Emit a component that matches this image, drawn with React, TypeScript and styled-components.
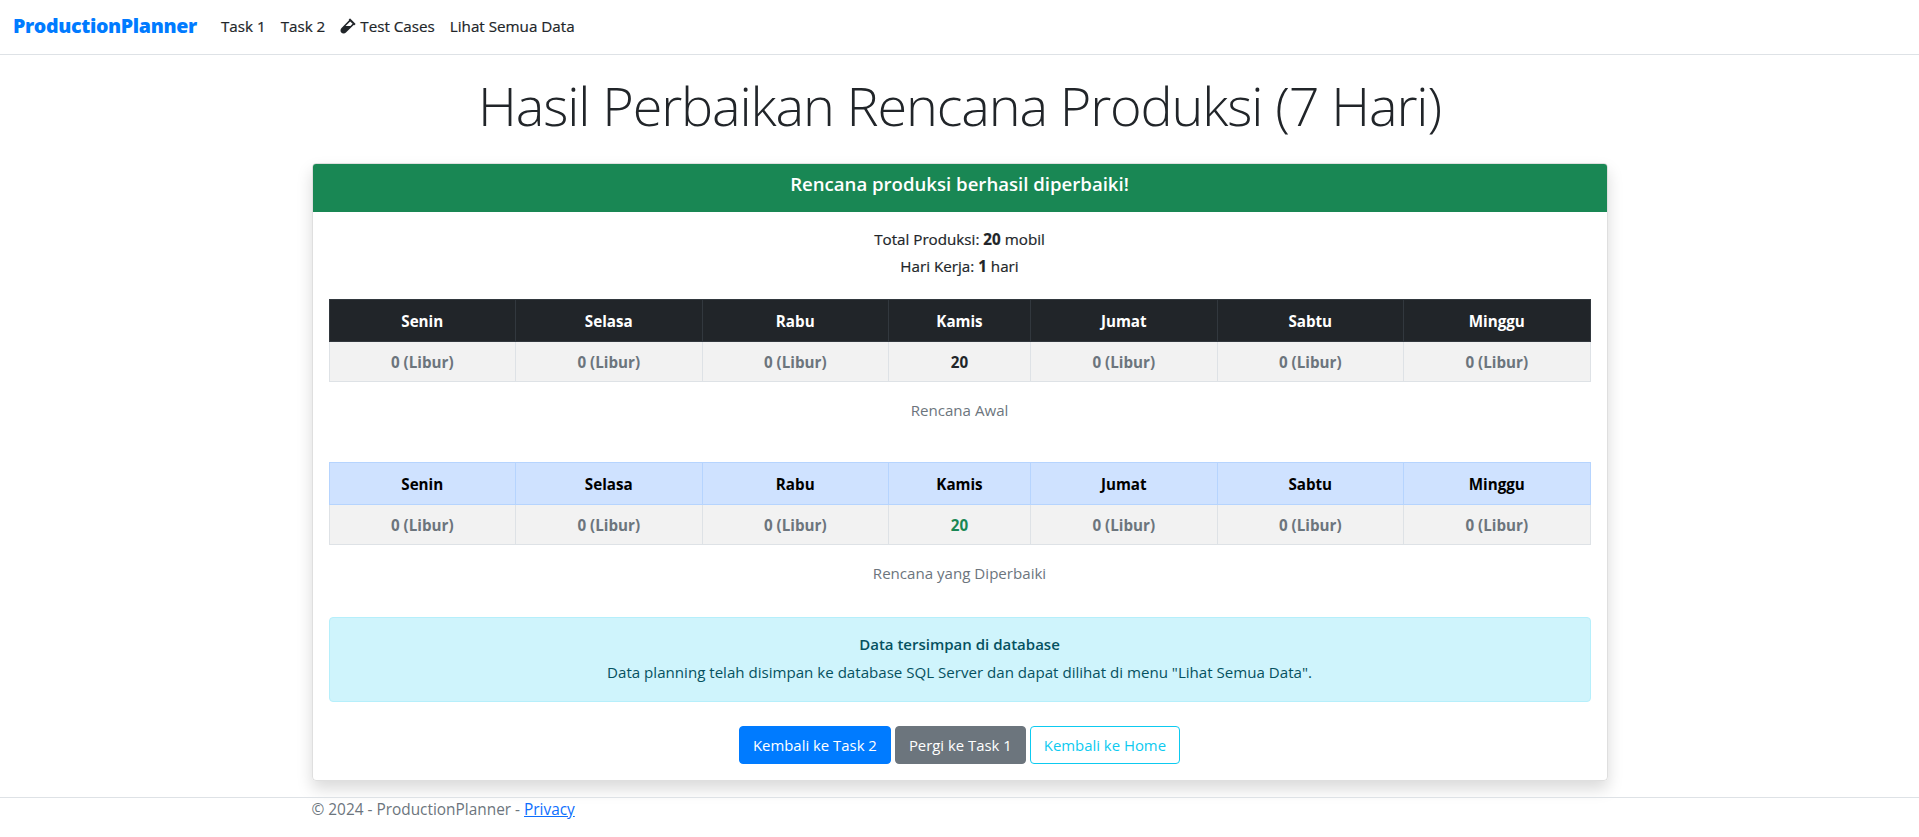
import React from "react";
import styled, { createGlobalStyle } from "styled-components";
import { FaVial } from "react-icons/fa";

const GlobalStyle = createGlobalStyle`
  html, body {
    margin: 0;
    padding: 0;
    background: #fff;
  }
  body {
    font-family: "Open Sans", "Noto Sans", sans-serif;
    font-size: 15.2px;
    line-height: 24px;
    color: #212529;
  }
  * {
    box-sizing: border-box;
  }
`;

const Navbar = styled.nav`
  display: flex;
  align-items: center;
  height: 55px;
  padding: 0 12px 2px 13px;
  border-bottom: 1px solid #dee2e6;
`;

const Brand = styled.a`
  font-size: 19.6px;
  font-weight: 800;
  letter-spacing: -0.35px;
  color: #007bff;
  margin-right: 16px;
  width: 184px;
  white-space: nowrap;
`;

const NavLink = styled.a`
  display: flex;
  align-items: center;
  gap: 4px;
  padding: 0 7px 0 8px;
  -webkit-text-stroke: 0.2px #212529;
  color: #212529;
`;

const Container = styled.main`
  width: 1320px;
  margin: 0 auto;
  padding: 0 12px;
`;

const Title = styled.h1`
  margin: 16px 0 16px;
  height: 76px;
  text-align: center;
  font-size: 54px;
  line-height: 68px;
  font-weight: 300;
  letter-spacing: -1.15px;
`;

const Card = styled.section`
  border: 1px solid rgba(0, 0, 0, 0.125);
  border-radius: 4px;
  box-shadow: 0 8px 16px rgba(0, 0, 0, 0.15);
  overflow: hidden;
`;

const CardHeader = styled.header`
  height: 48px;
  background: #198754;
  color: #fff;
  text-align: center;
  font-size: 18.6px;
  font-weight: 600;
  line-height: 39px;
`;

const CardBody = styled.div`
  padding: 15px 16px 16px;
`;

const Summary = styled.div`
  text-align: center;
  margin-bottom: 21px;
`;

const SummaryLine = styled.p`
  margin: 0 0 3px;
  height: 24px;
  -webkit-text-stroke: 0.2px #212529;
`;

const PlanBlock = styled.div<{ $gap: number }>`
  margin-bottom: ${(p) => p.$gap}px;
`;

const PlanTable = styled.table`
  width: 100%;
  border-collapse: collapse;
  table-layout: fixed;
  text-align: center;
`;

const HeadCell = styled.th<{ $light?: boolean; $narrow?: boolean }>`
  height: 42px;
  padding: 0;
  font-weight: 700;
  width: ${(p) => (p.$narrow ? "142px" : "auto")};
  background: ${(p) => (p.$light ? "#cfe2ff" : "#212529")};
  color: ${(p) => (p.$light ? "#000" : "#fff")};
  border: 1px solid ${(p) => (p.$light ? "#b6d4fe" : "#32383e")};
`;

const DayCell = styled.td<{ $tone: "off" | "plain" | "fixed" }>`
  height: 40px;
  padding: 0;
  font-weight: 700;
  background: #f2f2f2;
  border: 1px solid #dee2e6;
  color: ${(p) =>
    p.$tone === "off" ? "#6c757d" : p.$tone === "fixed" ? "#198754" : "#212529"};
`;

const Caption = styled.p`
  margin: 16px 0 0;
  height: 24px;
  text-align: center;
  font-size: 15.1px;
  color: #6c757d;
`;

const InfoBox = styled.div`
  height: 85px;
  padding-top: 14px;
  border: 1px solid #b6effb;
  border-radius: 4px;
  background: #cff4fc;
  color: #055160;
  text-align: center;
  font-size: 15.1px;
`;

const InfoTitle = styled.strong`
  display: block;
  height: 28px;
  font-size: 15px;
  font-weight: 600;
`;

const Actions = styled.div`
  display: flex;
  justify-content: center;
  gap: 4px;
  margin-top: 24px;
`;

const Button = styled.a<{ $kind: "primary" | "secondary" | "info" }>`
  display: block;
  height: 38px;
  padding: 6px 13px;
  border-radius: 4px;
  font-size: 14.9px;
  border: 1px solid
    ${(p) =>
      p.$kind === "primary" ? "#007bff" : p.$kind === "secondary" ? "#6c757d" : "#0dcaf0"};
  background: ${(p) =>
    p.$kind === "primary" ? "#007bff" : p.$kind === "secondary" ? "#6c757d" : "#fff"};
  color: ${(p) => (p.$kind === "info" ? "#0dcaf0" : "#fff")};
`;

const Footer = styled.footer`
  margin-top: 16px;
  border-top: 1px solid #dee2e6;
  font-size: 15.4px;
  color: #6c757d;
`;

const FooterInner = styled.div`
  width: 1320px;
  margin: 0 auto;
  padding: 0 12px;
`;

const FooterLink = styled.a`
  color: #0d6efd;
  text-decoration: underline;
`;

const days = ["Senin", "Selasa", "Rabu", "Kamis", "Jumat", "Sabtu", "Minggu"];

const Plan: React.FC<{ light?: boolean; caption: string; gap: number }> = ({
  light,
  caption,
  gap,
}) => (
  <PlanBlock $gap={gap}>
    <PlanTable>
      <thead>
        <tr>
          {days.map((d) => (
            <HeadCell key={d} $light={light} $narrow={d === "Kamis"}>
              {d}
            </HeadCell>
          ))}
        </tr>
      </thead>
      <tbody>
        <tr>
          {days.map((d) =>
            d === "Kamis" ? (
              <DayCell key={d} $tone={light ? "fixed" : "plain"}>
                20
              </DayCell>
            ) : (
              <DayCell key={d} $tone="off">
                0 (Libur)
              </DayCell>
            ),
          )}
        </tr>
      </tbody>
    </PlanTable>
    <Caption>{caption}</Caption>
  </PlanBlock>
);

const App: React.FC = () => (
  <>
    <GlobalStyle />
    <Navbar>
      <Brand>ProductionPlanner</Brand>
      <NavLink>Task 1</NavLink>
      <NavLink>Task 2</NavLink>
      <NavLink>
        <FaVial size={16} />
        Test Cases
      </NavLink>
      <NavLink>Lihat Semua Data</NavLink>
    </Navbar>
    <Container>
      <Title>Hasil Perbaikan Rencana Produksi (7 Hari)</Title>
      <Card>
        <CardHeader>Rencana produksi berhasil diperbaiki!</CardHeader>
        <CardBody>
          <Summary>
            <SummaryLine>
              Total Produksi: <b>20</b> mobil
            </SummaryLine>
            <SummaryLine>
              Hari Kerja: <b>1</b> hari
            </SummaryLine>
          </Summary>
          <Plan caption="Rencana Awal" gap={40} />
          <Plan light caption="Rencana yang Diperbaiki" gap={32} />
          <InfoBox>
            <InfoTitle>Data tersimpan di database</InfoTitle>
            Data planning telah disimpan ke database SQL Server dan dapat dilihat di menu "Lihat Semua Data".
          </InfoBox>
          <Actions>
            <Button $kind="primary">Kembali ke Task 2</Button>
            <Button $kind="secondary">Pergi ke Task 1</Button>
            <Button $kind="info">Kembali ke Home</Button>
          </Actions>
        </CardBody>
      </Card>
    </Container>
    <Footer>
      <FooterInner>
        © 2024 - ProductionPlanner - <FooterLink>Privacy</FooterLink>
      </FooterInner>
    </Footer>
  </>
);

export default App;
